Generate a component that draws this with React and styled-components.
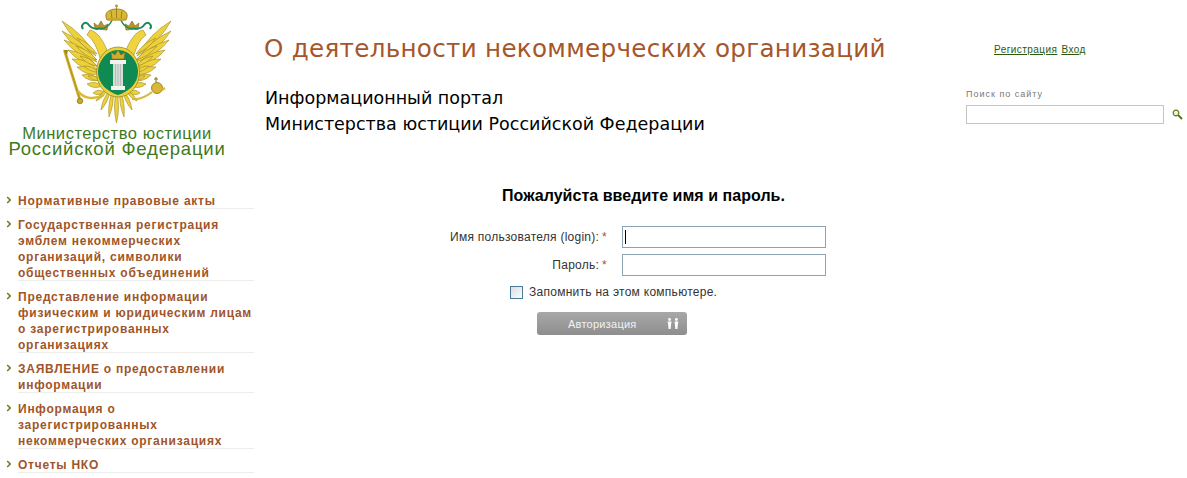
import React from 'react';
import styled, { createGlobalStyle } from 'styled-components';

const GlobalStyle = createGlobalStyle`
  html, body { margin: 0; padding: 0; background: #fff; }
  body { font-family: 'Liberation Sans', Arial, sans-serif; overflow: hidden; }
`;

const Page = styled.div`
  display: grid;
  grid-template-columns: 255px 1fr;
  width: 1187px;
  height: 478px;
  overflow: hidden;
`;

const Sidebar = styled.aside`
  display: flex;
  flex-direction: column;
`;

const LogoBlock = styled.div`
  height: 185px;
  display: flex;
  flex-direction: column;
  align-items: center;
  width: 234px;
`;

const EmblemSvg = styled.svg`
  flex: none;
  margin-left: -4px;
  filter: blur(0.35px);
`;

const LogoLine = styled.div`
  color: #3f7a1c;
  font-size: ${p => p.$size}px;
  line-height: ${p => p.$height}px;
  letter-spacing: ${p => p.$spacing}px;
  white-space: nowrap;
`;

const Menu = styled.ul`
  list-style: none;
  margin: 0;
  padding: 0;
`;

const MenuItem = styled.li`
  position: relative;
  margin-left: 18px;
  width: 236px;
  padding-top: 8px;
  border-bottom: 1px solid #eeeeea;
  box-sizing: border-box;
  height: ${p => p.$lines * 16 + 8}px;
  font-weight: bold;
  font-size: 12px;
  line-height: 16px;
  letter-spacing: 0.75px;
  color: #a0552a;
  white-space: nowrap;
`;

const Arrow = styled.svg`
  position: absolute;
  left: -12px;
  top: 11px;
`;

const Main = styled.main`
  display: flex;
  flex-direction: column;
`;

const Header = styled.header`
  display: grid;
  grid-template-columns: 711px 1fr;
  height: 184px;
`;

const Titles = styled.div`
  padding: 32px 0 0 9px;
`;

const Title = styled.h1`
  margin: 0 0 19px;
  font-family: 'DejaVu Sans', Verdana, sans-serif;
  font-size: 24.6px;
  line-height: 34px;
  font-weight: normal;
  letter-spacing: 0.3px;
  color: #a5562a;
  white-space: nowrap;
`;

const Subtitle = styled.div`
  padding-left: 1px;
  font-family: 'DejaVu Sans', Verdana, sans-serif;
  font-size: 17.5px;
  line-height: 26px;
  color: #000;
  white-space: nowrap;
`;

const Side = styled.div`
  display: flex;
  flex-direction: column;
`;

const UserLinks = styled.div`
  display: flex;
  gap: 4px;
  padding: 43px 0 0 28px;
  height: 45px;
  box-sizing: content-box;
`;

const UserLink = styled.a`
  font-size: 10px;
  line-height: 13px;
  letter-spacing: 0.45px;
  color: #2a5a0e;
  text-decoration: underline;
`;

const SearchLabel = styled.div`
  font-size: 9px;
  line-height: 12px;
  letter-spacing: 1px;
  color: #777;
  margin-bottom: 5px;
`;

const SearchRow = styled.div`
  display: flex;
  align-items: center;
  gap: 8px;
`;

const SearchInput = styled.input`
  width: 198px;
  height: 19px;
  box-sizing: border-box;
  border: 1px solid #c4c4c4;
  padding: 0;
  background: #fff;
`;

const LoginForm = styled.form`
  display: flex;
  flex-direction: column;
  width: 760px;
`;

const FormTitle = styled.h2`
  margin: 0 0 18px;
  padding-left: 247px;
  font-size: 16px;
  line-height: 24px;
  font-weight: bold;
  letter-spacing: 0.04px;
  color: #000;
  white-space: nowrap;
`;

const Row = styled.div`
  display: grid;
  grid-template-columns: 352px 204px;
  column-gap: 15px;
  align-items: center;
  height: 22px;
  margin-bottom: 6px;
`;

const Label = styled.label`
  text-align: right;
  font-size: 12px;
  letter-spacing: 0.25px;
  color: #333;
  white-space: nowrap;
`;

const Star = styled.span`
  color: #a0552a;
  margin-left: 3px;
`;

const TextInput = styled.input`
  display: block;
  width: 204px;
  height: 22px;
  box-sizing: border-box;
  border: 1px solid #8ba3b3;
  padding: 0 2px;
  background: #fff;
  outline: none;
`;

const FieldWrap = styled.div`
  position: relative;
`;

const Caret = styled.span`
  position: absolute;
  left: 3px;
  top: 4px;
  width: 1px;
  height: 14px;
  background: #000;
`;

const Remember = styled.div`
  display: flex;
  align-items: center;
  gap: 6px;
  padding-left: 255px;
  height: 16px;
  margin-top: 2px;
  font-size: 12px;
  letter-spacing: 0.27px;
  color: #333;
`;

const Check = styled.span`
  display: block;
  width: 11px;
  height: 11px;
  border: 1px solid #4a7d9c;
  background: linear-gradient(135deg, #d8dee2, #fbfcfc);
`;

const SubmitRow = styled.div`
  padding: 12px 0 0 282px;
`;

const Submit = styled.button`
  display: flex;
  align-items: center;
  width: 150px;
  height: 23px;
  padding: 0 0 0 31px;
  box-sizing: border-box;
  border: 0;
  border-radius: 3px;
  background: linear-gradient(#a8a8a8, #8e8e8e);
  color: #f2f2f2;
  font-family: 'Liberation Sans', Arial, sans-serif;
  font-size: 11px;
  letter-spacing: 0.25px;
`;

const PeopleIcon = styled.svg`
  margin-left: 30px;
`;

const menu = [
  ['Нормативные правовые акты'],
  ['Государственная регистрация', 'эмблем некоммерческих', 'организаций, символики', 'общественных объединений'],
  ['Представление информации', 'физическим и юридическим лицам', 'о зарегистрированных', 'организациях'],
  ['ЗАЯВЛЕНИЕ о предоставлении', 'информации'],
  ['Информация о', 'зарегистрированных', 'некоммерческих организациях'],
  ['Отчеты НКО'],
];

// one feather: a lens from root to tip
const lens = (x0, y0, x1, y1, w) => {
  const dx = x1 - x0;
  const dy = y1 - y0;
  const len = Math.hypot(dx, dy);
  const nx = (-dy / len) * w;
  const ny = (dx / len) * w;
  const mx = (x0 + x1) / 2;
  const my = (y0 + y1) / 2;
  return `M${x0} ${y0} Q${mx + nx} ${my + ny} ${x1} ${y1} Q${mx - nx} ${my - ny} ${x0} ${y0} Z`;
};

const longFeathers = [
  [46, 56, 12, 21, 6.5], [46, 60, 12, 31, 6.5], [47, 62, 14, 40, 6.5], [47, 66, 18, 50, 6.5],
  [48, 70, 22, 59, 6.5], [49, 74, 27, 67, 6], [50, 80, 32, 75, 5.5], [52, 86, 37, 84, 5], [54, 92, 43, 93, 4.5],
];
const shortFeathers = [
  [47, 54, 27, 38, 4], [47, 60, 26, 46, 4], [47, 66, 30, 56, 4], [48, 72, 34, 66, 3.5], [50, 80, 38, 76, 3.5],
];
const tailFeathers = [
  [66.5, 90, 66.5, 123, 4], [63, 90, 59, 117, 3.5], [70, 90, 74, 117, 3.5], [60, 90, 51, 110, 3.5],
  [73, 90, 82, 110, 3.5], [57, 90, 46, 101, 3], [76, 90, 87, 101, 3],
];

const Feather = ({ f }) => (
  <path d={lens(...f)} fill="#ecd03c" stroke="#a08a1e" strokeWidth="0.6" />
);

const Wing = () => (
  <g>
    {longFeathers.map(f => <Feather key={f.join()} f={f} />)}
    {shortFeathers.map(f => <Feather key={f.join()} f={f} />)}
    <path d="M40 30 C46 31 52 38 57 50 L50 58 C47 48 44 40 37 35 Z" fill="#efd440" stroke="#a08a1e" strokeWidth="0.6" />
    <path d="M45 29 L44 23 L48 26 L51 21 L54 26 L58 24 L57 30 Z" fill="#b8962a" stroke="#7a6414" strokeWidth="0.6" />
    <path d="M33 29 C30 25 35 21 38 24 C40 27 44 29 48 29" fill="none" stroke="#1c8a58" strokeWidth="2" />
    <path d="M48 28 C54 30 60 26 63 18" fill="none" stroke="#1c8a58" strokeWidth="1.4" />
  </g>
);

const Emblem = () => (
  <EmblemSvg width="130" height="125" viewBox="0 0 130 125">
    <Wing />
    <g transform="translate(133 0) scale(-1 1)"><Wing /></g>
    {/* большая корона */}
    <path d="M57 20 C53 12 60 9 66.5 9 C73 9 80 12 76 20 Z" fill="#d9b835" stroke="#8f7518" strokeWidth="0.8" />
    <path d="M66.5 6 V20 M61 11 L62 19 M72 11 L71 19" stroke="#8f7518" strokeWidth="0.8" />
    <circle cx="66.5" cy="6" r="1.4" fill="#b8962a" />
    <rect x="58" y="18" width="17" height="2.5" fill="#c9a72d" />
    {/* хвост */}
    {tailFeathers.map(f => <Feather key={f.join()} f={f} />)}
    {/* щит */}
    <ellipse cx="68" cy="72" rx="21.5" ry="25" fill="#ecd03c" stroke="#a08a1e" strokeWidth="0.8" />
    <path d="M68 50 C80 50 88 62 88 72 C88 84 78 92 68 95 C58 92 48 84 48 72 C48 62 56 50 68 50 Z" fill="#0f8a52" />
    {/* колонна */}
    <rect x="63" y="64" width="10" height="22" fill="#d6dcd8" />
    <rect x="60" y="60" width="16" height="4" fill="#f0f2ef" />
    <rect x="61" y="86" width="14" height="4" fill="#f2f4f1" />
    <path d="M65.5 64 V86 M68 64 V86 M70.5 64 V86" stroke="#aab2ae" strokeWidth="0.7" />
    <path d="M62 59 L61 52 L65 55 L68 50 L71 55 L75 52 L74 59 Z" fill="#d0ac30" stroke="#7a6414" strokeWidth="0.5" />
    {/* скипетр */}
    <path d="M15 52 L30 100" stroke="#d5b52e" strokeWidth="3" strokeLinecap="round" />
    <path d="M15 52 L30 100" stroke="#8f7518" strokeWidth="0.6" />
    <path d="M13 50 L18 50 L17 55 Z" fill="#a08a1e" />
    <circle cx="30" cy="101" r="2.8" fill="#c9a72d" stroke="#7a6414" strokeWidth="0.6" />
    <path d="M28 91 C34 99 44 100 54 95" fill="none" stroke="#d9b935" strokeWidth="2.4" />
    {/* держава */}
    <circle cx="107" cy="88" r="5.5" fill="#d9b835" stroke="#8f7518" strokeWidth="0.8" />
    <path d="M106 82 V77 M104 79 H108" stroke="#8f7518" strokeWidth="1.1" />
    <path d="M112 90 L115 88 M82 99 C90 100 97 96 102 92" fill="none" stroke="#d9b935" strokeWidth="2.2" />
  </EmblemSvg>
);

const App = () => (
  <Page>
    <GlobalStyle />
    <Sidebar>
      <LogoBlock>
        <Emblem />
        <LogoLine $size={16.5} $height={16} $spacing={0.55}>Министерство юстиции</LogoLine>
        <LogoLine $size={18.5} $height={15} $spacing={0.8}>Российской Федерации</LogoLine>
      </LogoBlock>
      <Menu>
        {menu.map(lines => (
          <MenuItem key={lines[0]} $lines={lines.length}>
            <Arrow width="6" height="8" viewBox="0 0 6 8">
              <path d="M1.2 1 L4.2 4 L1.2 7" fill="none" stroke="#5f7d1e" strokeWidth="1.5" />
            </Arrow>
            {lines.map(line => <div key={line}>{line}</div>)}
          </MenuItem>
        ))}
      </Menu>
    </Sidebar>
    <Main>
      <Header>
        <Titles>
          <Title>О деятельности некоммерческих организаций</Title>
          <Subtitle>Информационный портал</Subtitle>
          <Subtitle>Министерства юстиции Российской Федерации</Subtitle>
        </Titles>
        <Side>
          <UserLinks>
            <UserLink>Регистрация</UserLink>
            <UserLink>Вход</UserLink>
          </UserLinks>
          <SearchLabel>Поиск по сайту</SearchLabel>
          <SearchRow>
            <SearchInput />
            <svg width="11" height="11" viewBox="0 0 11 11">
              <circle cx="4" cy="4" r="2.8" fill="#eef4d8" stroke="#5f7d1e" strokeWidth="1.2" />
              <path d="M6.2 6.2 L10 10" stroke="#4f6d16" strokeWidth="1.8" />
            </svg>
          </SearchRow>
        </Side>
      </Header>
      <LoginForm>
        <FormTitle>Пожалуйста введите имя и пароль.</FormTitle>
        <Row>
          <Label>Имя пользователя (login):<Star>*</Star></Label>
          <FieldWrap><TextInput /><Caret /></FieldWrap>
        </Row>
        <Row>
          <Label>Пароль:<Star>*</Star></Label>
          <FieldWrap><TextInput /></FieldWrap>
        </Row>
        <Remember><Check />Запомнить на этом компьютере.</Remember>
        <SubmitRow>
          <Submit type="button">
            Авторизация
            <PeopleIcon width="12" height="11" viewBox="0 0 12 11">
              <g fill="#fff">
                <circle cx="2.6" cy="1.5" r="1.4" />
                <path d="M0.6 3.4 H4.6 L4 7 L3.6 11 H1.6 L1.2 7 Z" />
                <circle cx="9.4" cy="1.5" r="1.4" />
                <path d="M7.4 3.4 H11.4 L10.8 7 L10.4 11 H8.4 L8 7 Z" />
              </g>
            </PeopleIcon>
          </Submit>
        </SubmitRow>
      </LoginForm>
    </Main>
  </Page>
);

export default App;
